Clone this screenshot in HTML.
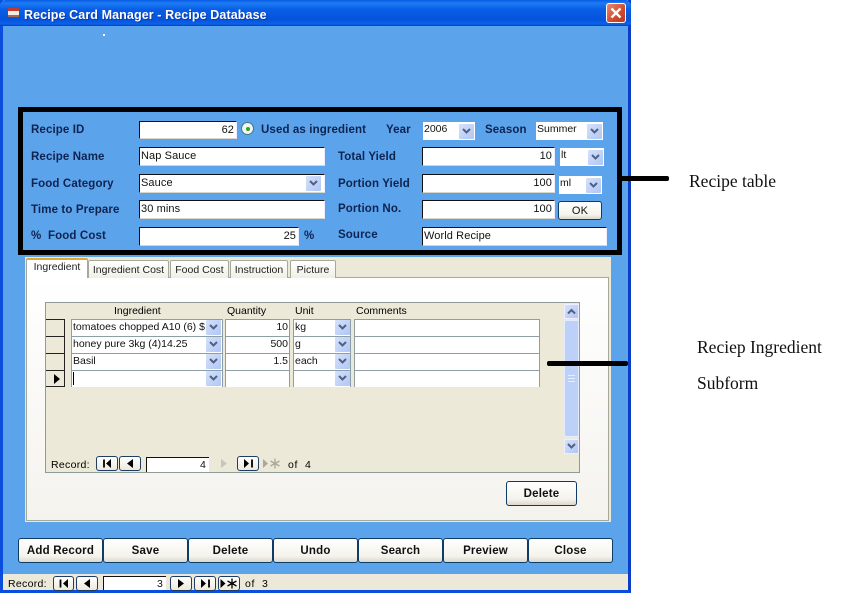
<!DOCTYPE html>
<html><head><meta charset="utf-8"><style>
html,body{margin:0;padding:0;background:#fff;width:865px;height:593px;overflow:hidden}
div,span,svg{position:absolute;box-sizing:border-box}
body{font-family:"Liberation Sans",sans-serif;color:#000}
.t{white-space:nowrap;font-size:11px;line-height:14px}
.l{white-space:nowrap;font-weight:bold;font-size:11.5px;line-height:14px;color:#0f2350;letter-spacing:.12px}
.f{background:#fff;border-top:1px solid #111;border-left:1px solid #111;border-bottom:1px solid #d6d6cc;border-right:1px solid #eef;font-size:11px;line-height:16px;padding:0 1px;white-space:nowrap;overflow:hidden;color:#111;letter-spacing:.1px}
.r{text-align:right;padding-right:2px}
.n{background:#fff;font-size:10.5px;line-height:15px;padding:0 1px;white-space:nowrap;overflow:hidden;color:#111}
.a{width:15px;height:15px;background:linear-gradient(135deg,#d5e1fb,#b0c6f4);border-radius:1px}
.a svg{left:3px;top:4px}
.b{background:linear-gradient(#fff,#f4f3ec 75%,#dcd8cb);border:1px solid #0e3c66;border-radius:3px;font-weight:bold;font-size:11.5px;line-height:23px;padding-top:1px;text-align:center;color:#111;letter-spacing:.2px}
.nb{background:linear-gradient(#fff,#ece9dc);border:1px solid #1f3c63;border-radius:3px;height:15px}
.s{font-family:"Liberation Serif",serif;font-size:17.5px;line-height:18px;white-space:nowrap;color:#111}
.g{background:#fff;border:1px solid #8c9ea6;font-size:10.5px;line-height:15px;color:#111;white-space:nowrap;overflow:hidden;padding:0 1px}
.tab{background:linear-gradient(#fff,#f0efe6);border:1px solid #a4a99a;border-bottom:0;border-radius:2px 2px 0 0;font-size:10.5px;line-height:18px;text-align:center;color:#222}
.sel{left:46px;width:19px;height:18px;background:#ece9d8;border:1px solid #222;border-left:0}
</style></head><body>
<!-- window -->
<div style="left:0;top:0;width:631px;height:593px;background:#5ba4ec;border-left:3px solid #0a4ee0;border-right:3px solid #0a3ec8;border-bottom:3px solid #0a4ee0"></div>
<div style="left:0;top:0;width:631px;height:26px;background:linear-gradient(#0a5be4,#1b7cf3 12%,#0a5fe6 35%,#0453dd 75%,#0a62e8 92%,#0440c4);border-radius:6px 6px 0 0"></div>
<div style="left:8px;top:8px;width:11px;height:9px;background:#f2ece0;border-top:3px solid #c03a30;border-bottom:2px solid #a06a50"></div>
<div class="t" style="left:24px;top:8px;color:#fff;font-weight:bold;font-size:12.5px;letter-spacing:.1px;text-shadow:1px 1px 0 #0f3da0">Recipe Card Manager - Recipe Database</div>
<div style="left:606px;top:3px;width:20px;height:20px;background:linear-gradient(135deg,#e88a70,#d0492c 60%,#b93a1c);border:1px solid #fff;border-radius:3px"></div>
<svg style="left:606px;top:3px" width="20" height="20"><path d="M5.500 5.500L14.500 14.500M14.500 5.500L5.500 14.500" stroke="#fff" stroke-width="2.400"/></svg>
<div style="left:103px;top:34px;width:2px;height:2px;background:#fff"></div>

<!-- black frame -->
<div style="left:18px;top:107px;width:604px;height:148px;border:5px solid #000"></div>

<div class="l" style="left:31px;top:123px">Recipe ID</div>
<div class="l" style="left:31px;top:150px">Recipe Name</div>
<div class="l" style="left:31px;top:177px">Food Category</div>
<div class="l" style="left:31px;top:203px">Time to Prepare</div>
<div class="l" style="left:31px;top:229px">%</div>
<div class="l" style="left:48px;top:229px">Food Cost</div>

<div class="f r" style="left:139px;top:121px;width:98px;height:18px">62</div>
<div style="left:241px;top:122px;width:13px;height:13px;border-radius:50%;background:#f4f4ee;border:1px solid #3a7d8a"></div>
<div style="left:246px;top:127px;width:4px;height:4px;border-radius:50%;background:#2aa52a"></div>
<div class="l" style="left:261px;top:123px">Used as ingredient</div>
<div class="f" style="left:139px;top:147px;width:186px;height:19px">Nap Sauce</div>
<div class="f" style="left:139px;top:174px;width:186px;height:19px">Sauce</div>
<div class="a" style="left:306px;top:176px"><svg width="9" height="7"><path d="M1 1L4.500 4.500L8 1" fill="none" stroke="#4d6185" stroke-width="2"/></svg></div>
<div class="f" style="left:139px;top:200px;width:186px;height:19px">30 mins</div>
<div class="f r" style="left:139px;top:227px;width:160px;height:19px">25</div>
<div class="l" style="left:304px;top:229px">%</div>

<div class="l" style="left:386px;top:123px">Year</div>
<div class="n" style="left:423px;top:122px;width:52px;height:18px">2006</div>
<div class="a" style="left:459px;top:124px"><svg width="9" height="7"><path d="M1 1L4.500 4.500L8 1" fill="none" stroke="#4d6185" stroke-width="2"/></svg></div>
<div class="l" style="left:485px;top:123px">Season</div>
<div class="n" style="left:536px;top:122px;width:67px;height:18px">Summer</div>
<div class="a" style="left:587px;top:124px"><svg width="9" height="7"><path d="M1 1L4.500 4.500L8 1" fill="none" stroke="#4d6185" stroke-width="2"/></svg></div>

<div class="l" style="left:338px;top:150px">Total Yield</div>
<div class="f r" style="left:422px;top:147px;width:133px;height:19px">10</div>
<div class="n" style="left:560px;top:148px;width:44px;height:18px">lt</div>
<div class="a" style="left:588px;top:150px"><svg width="9" height="7"><path d="M1 1L4.500 4.500L8 1" fill="none" stroke="#4d6185" stroke-width="2"/></svg></div>
<div class="l" style="left:338px;top:177px">Portion Yield</div>
<div class="f r" style="left:422px;top:174px;width:133px;height:19px">100</div>
<div class="n" style="left:559px;top:176px;width:43px;height:18px">ml</div>
<div class="a" style="left:586px;top:178px"><svg width="9" height="7"><path d="M1 1L4.500 4.500L8 1" fill="none" stroke="#4d6185" stroke-width="2"/></svg></div>
<div class="l" style="left:338px;top:202px">Portion No.</div>
<div class="f r" style="left:422px;top:200px;width:133px;height:19px">100</div>
<div class="b" style="left:558px;top:201px;width:44px;height:19px;line-height:17px;font-weight:normal;font-size:11px">OK</div>
<div class="l" style="left:338px;top:228px">Source</div>
<div class="f" style="left:422px;top:227px;width:185px;height:19px">World Recipe</div>

<!-- tab control -->
<div style="left:25px;top:257px;width:586px;height:265px;background:#ece9d8"></div>
<div style="left:26px;top:277px;width:583px;height:244px;background:linear-gradient(#fff,#f4f3ee);border:1px solid #a4a99a"></div>
<div class="tab" style="left:26px;top:258px;width:62px;height:20px;background:#fff;border-top:2px solid #e6a72a;line-height:15px;z-index:2">Ingredient</div>
<div class="tab" style="left:88px;top:260px;width:81px;height:18px">Ingredient Cost</div>
<div class="tab" style="left:170px;top:260px;width:59px;height:18px">Food Cost</div>
<div class="tab" style="left:230px;top:260px;width:58px;height:18px">Instruction</div>
<div class="tab" style="left:290px;top:260px;width:46px;height:18px">Picture</div>

<!-- subform -->
<div style="left:45px;top:302px;width:535px;height:171px;background:#ece9d8;border:1px solid #8e9c98"></div>
<div class="t" style="left:114px;top:304px;font-size:10.5px">Ingredient</div>
<div class="t" style="left:227px;top:304px;font-size:10.5px">Quantity</div>
<div class="t" style="left:295px;top:304px;font-size:10.5px">Unit</div>
<div class="t" style="left:356px;top:304px;font-size:10.5px">Comments</div>

<div class="sel" style="top:319px"></div>
<div class="sel" style="top:336px"></div>
<div class="sel" style="top:353px"></div>
<div class="sel" style="top:370px;height:17px"></div>
<svg style="left:53px;top:373px" width="8" height="12"><path d="M1 1L7 6L1 11Z" fill="#000"/></svg>

<div class="g" style="left:71px;top:319px;width:152px;height:18px">tomatoes chopped A10 (6) $</div>
<div class="g" style="left:71px;top:336px;width:152px;height:18px">honey pure 3kg (4)14.25</div>
<div class="g" style="left:71px;top:353px;width:152px;height:18px">Basil</div>
<div class="g" style="left:71px;top:370px;width:152px;height:17px;border-bottom:0"></div>
<div style="left:73px;top:372px;width:1px;height:13px;background:#000"></div>

<div class="g" style="left:225px;top:319px;width:65px;height:18px;text-align:right">10</div>
<div class="g" style="left:225px;top:336px;width:65px;height:18px;text-align:right">500</div>
<div class="g" style="left:225px;top:353px;width:65px;height:18px;text-align:right">1.5</div>
<div class="g" style="left:225px;top:370px;width:65px;height:17px;border-bottom:0"></div>

<div class="g" style="left:293px;top:319px;width:58px;height:18px">kg</div>
<div class="g" style="left:293px;top:336px;width:58px;height:18px">g</div>
<div class="g" style="left:293px;top:353px;width:58px;height:18px">each</div>
<div class="g" style="left:293px;top:370px;width:58px;height:17px;border-bottom:0"></div>

<div class="g" style="left:354px;top:319px;width:186px;height:18px"></div>
<div class="g" style="left:354px;top:336px;width:186px;height:18px"></div>
<div class="g" style="left:354px;top:353px;width:186px;height:18px"></div>
<div class="g" style="left:354px;top:370px;width:186px;height:17px;border-bottom:0"></div>

<div class="a" style="left:206px;top:320px"><svg width="9" height="7"><path d="M1 1L4.500 4.500L8 1" fill="none" stroke="#4d6185" stroke-width="2"/></svg></div>
<div class="a" style="left:206px;top:337px"><svg width="9" height="7"><path d="M1 1L4.500 4.500L8 1" fill="none" stroke="#4d6185" stroke-width="2"/></svg></div>
<div class="a" style="left:206px;top:354px"><svg width="9" height="7"><path d="M1 1L4.500 4.500L8 1" fill="none" stroke="#4d6185" stroke-width="2"/></svg></div>
<div class="a" style="left:206px;top:371px"><svg width="9" height="7"><path d="M1 1L4.500 4.500L8 1" fill="none" stroke="#4d6185" stroke-width="2"/></svg></div>
<div class="a" style="left:335px;top:320px"><svg width="9" height="7"><path d="M1 1L4.500 4.500L8 1" fill="none" stroke="#4d6185" stroke-width="2"/></svg></div>
<div class="a" style="left:335px;top:337px"><svg width="9" height="7"><path d="M1 1L4.500 4.500L8 1" fill="none" stroke="#4d6185" stroke-width="2"/></svg></div>
<div class="a" style="left:335px;top:354px"><svg width="9" height="7"><path d="M1 1L4.500 4.500L8 1" fill="none" stroke="#4d6185" stroke-width="2"/></svg></div>
<div class="a" style="left:335px;top:371px"><svg width="9" height="7"><path d="M1 1L4.500 4.500L8 1" fill="none" stroke="#4d6185" stroke-width="2"/></svg></div>

<!-- scrollbar -->
<div class="a" style="left:564px;top:304px;border:1px solid #eef"><svg style="left:2px;top:3px" width="9" height="7"><path d="M1 5.500L4.500 2L8 5.500" fill="none" stroke="#4d6185" stroke-width="2"/></svg></div>
<div style="left:564px;top:320px;width:15px;height:117px;background:#bdd0f7;border:1px solid #e4ecfc;border-radius:2px"></div>
<div style="left:568px;top:375px;width:7px;height:7px;border-top:1px solid #e8eefc;border-bottom:1px solid #e8eefc"></div>
<div style="left:568px;top:378px;width:7px;height:1px;background:#e8eefc"></div>
<div class="a" style="left:564px;top:439px;border:1px solid #eef"><svg style="left:2px;top:3px" width="9" height="7"><path d="M1 1L4.500 4.500L8 1" fill="none" stroke="#4d6185" stroke-width="2"/></svg></div>

<!-- subform nav -->
<div class="t" style="left:51px;top:458px;font-size:10.5px;letter-spacing:.3px">Record:</div>
<div class="nb" style="left:96px;top:456px;width:22px"></div>
<svg style="left:96px;top:456px" width="22" height="15"><path d="M8 3.500V11.500" stroke="#000" stroke-width="1.800"/><path d="M15 3L10 7.500L15 12Z" fill="#000"/></svg>
<div class="nb" style="left:119px;top:456px;width:22px"></div>
<svg style="left:119px;top:456px" width="22" height="15"><path d="M14 3L8 7.500L14 12Z" fill="#000"/></svg>
<div class="f r" style="left:146px;top:457px;width:63px;height:15px;line-height:15px;padding-right:3px;border-bottom:0;border-right:0;font-size:10.5px">4</div>
<svg style="left:213px;top:456px" width="22" height="15"><path d="M8 3L14 7.500L8 12Z" fill="#c8c6b8"/></svg>
<div class="nb" style="left:237px;top:456px;width:22px"></div>
<svg style="left:237px;top:456px" width="22" height="15"><path d="M15 3.500V11.500" stroke="#000" stroke-width="1.800"/><path d="M7 3L12 7.500L7 12Z" fill="#000"/></svg>
<svg style="left:261px;top:456px" width="22" height="15"><path d="M2 3L7 7.500L2 12Z" fill="#aaa89a"/><path d="M14 2.500V12.500M9.500 5L18.500 10M9.500 10L18.500 5" stroke="#aaa89a" stroke-width="1.300"/></svg>
<div class="t" style="left:288px;top:458px;font-size:10.5px;letter-spacing:.6px">of&nbsp; 4</div>

<div class="b" style="left:506px;top:481px;width:71px;height:25px">Delete</div>

<!-- bottom buttons -->
<div class="b" style="left:18px;top:538px;width:85px;height:25px">Add Record</div>
<div class="b" style="left:103px;top:538px;width:85px;height:25px">Save</div>
<div class="b" style="left:188px;top:538px;width:85px;height:25px">Delete</div>
<div class="b" style="left:273px;top:538px;width:85px;height:25px">Undo</div>
<div class="b" style="left:358px;top:538px;width:85px;height:25px">Search</div>
<div class="b" style="left:443px;top:538px;width:85px;height:25px">Preview</div>
<div class="b" style="left:528px;top:538px;width:85px;height:25px">Close</div>

<!-- status bar -->
<div style="left:3px;top:574px;width:625px;height:16px;background:#ece9d8"></div>
<div class="t" style="left:8px;top:577px;font-size:10.5px;letter-spacing:.3px">Record:</div>
<div class="nb" style="left:53px;top:576px;width:21px"></div>
<svg style="left:53px;top:576px" width="21" height="15"><path d="M7.500 3.500V11.500" stroke="#000" stroke-width="1.800"/><path d="M15 3L10 7.500L15 12Z" fill="#000"/></svg>
<div class="nb" style="left:76px;top:576px;width:22px"></div>
<svg style="left:76px;top:576px" width="22" height="15"><path d="M14 3L8 7.500L14 12Z" fill="#000"/></svg>
<div class="f r" style="left:103px;top:576px;width:63px;height:14px;line-height:15px;padding-right:3px;border-bottom:0;border-right:0;font-size:10.5px">3</div>
<div class="nb" style="left:170px;top:576px;width:22px"></div>
<svg style="left:170px;top:576px" width="22" height="15"><path d="M8 3L14 7.500L8 12Z" fill="#000"/></svg>
<div class="nb" style="left:194px;top:576px;width:22px"></div>
<svg style="left:194px;top:576px" width="22" height="15"><path d="M15 3.500V11.500" stroke="#000" stroke-width="1.800"/><path d="M7 3L12 7.500L7 12Z" fill="#000"/></svg>
<div class="nb" style="left:218px;top:576px;width:22px"></div>
<svg style="left:218px;top:576px" width="22" height="15"><path d="M2.500 3L7.500 7.500L2.500 12Z" fill="#000"/><path d="M14 2.500V12.500M9.500 5L18.500 10M9.500 10L18.500 5" stroke="#000" stroke-width="1.300"/></svg>
<div class="t" style="left:245px;top:577px;font-size:10.5px;letter-spacing:.6px">of&nbsp; 3</div>

<!-- annotation -->
<div style="left:621px;top:176px;width:48px;height:5px;background:#000;border-radius:0 2px 2px 0"></div>
<div style="left:547px;top:361px;width:81px;height:5px;background:#000;border-radius:2px"></div>
<div class="s" style="left:689px;top:172px">Recipe table</div>
<div class="s" style="left:697px;top:338px">Reciep Ingredient</div>
<div class="s" style="left:697px;top:374px">Subform</div>
</body></html>
